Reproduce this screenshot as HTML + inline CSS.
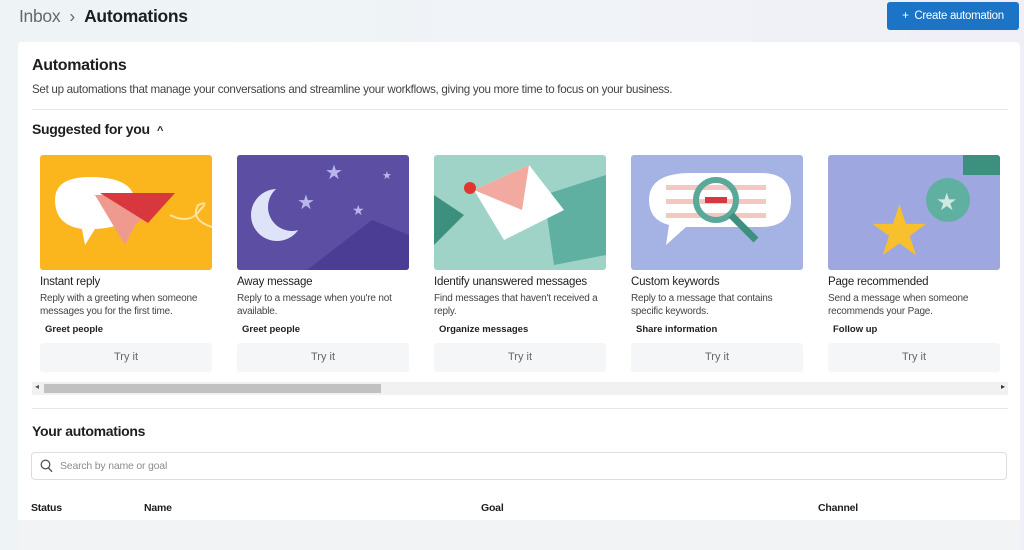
<!DOCTYPE html>
<html><head><meta charset="utf-8"><style>
*{box-sizing:border-box;margin:0;padding:0}
body{width:1024px;height:528px;overflow:hidden;font-family:"Liberation Sans",sans-serif;background:linear-gradient(90deg,#eef4f6,#f0f3f7 60%,#f0eef7);position:relative;color:#1c1e21}
.bc{position:absolute;left:19px;top:6px;font-size:17.5px;letter-spacing:-0.3px}
.bc .g{color:#65676b}
.bc b{font-weight:bold}
.btn{position:absolute;left:887px;top:2px;width:132px;height:28px;background:#1b74c5;border-radius:3px;color:#fff;font-size:11.5px;line-height:28px;text-align:center;letter-spacing:-0.3px}
.card{position:absolute;left:18px;top:42px;width:1002px;height:500px;background:#fff;border-radius:4px}
.h1{position:absolute;left:14px;top:15px;font-size:16px;font-weight:bold;letter-spacing:-0.3px}
.sub{position:absolute;left:14px;top:41px;font-size:11.6px;color:#444;letter-spacing:-0.3px}
.hr{position:absolute;left:14px;width:976px;height:1px;background:#e4e6ea}
.h2{position:absolute;left:14px;font-size:14px;font-weight:bold;letter-spacing:-0.3px}
.item{position:absolute;top:113px;width:172px}
.item svg{display:block;width:172px;height:115px;border-radius:3px}
.t{font-size:11.5px;margin-top:6px;letter-spacing:-0.2px}
.d{font-size:10px;color:#444;line-height:12.5px;margin-top:5px;height:25px;letter-spacing:-0.2px}
.tag{font-size:9.5px;font-weight:bold;margin:6px 0 0 5px}
.try{margin-top:8px;height:29px;background:#f5f6f7;border-radius:3px;text-align:center;line-height:29px;font-size:11px;color:#666}
.sb{position:absolute;left:14px;top:340px;width:976px;height:13px;background:#f1f1f1}
.sb .th{position:absolute;left:12px;top:2px;width:337px;height:9px;background:#c1c1c1}
.search{position:absolute;left:13px;top:410px;width:976px;height:28px;border:1px solid #dadde1;border-radius:4px;font-size:10.5px;color:#8a8d91;line-height:26px;padding-left:28px;letter-spacing:-0.2px}
.th2{position:absolute;top:460px;font-size:10.5px;font-weight:bold;letter-spacing:-0.2px}
</style></head><body>
<div class="bc"><span class="g">Inbox</span> <span class="g">&nbsp;›&nbsp;</span> <b>Automations</b></div>
<div class="btn">+&nbsp; Create automation</div>
<div class="card">
<div class="h1">Automations</div>
<div class="sub">Set up automations that manage your conversations and streamline your workflows, giving you more time to focus on your business.</div>
<div class="hr" style="top:67px"></div>
<div class="h2" style="top:79px">Suggested for you &nbsp;<span style="font-size:11px">^</span></div>

<div class="item" style="left:22px">
<svg viewBox="0 0 172 115"><rect width="172" height="115" fill="#fcb61d"/><path d="M15 45 Q15 22 50 22 Q95 22 95 48 Q95 72 55 74 L45 90 L42 74 Q15 70 15 45Z" fill="#fff"/><path d="M55 40 L135 38 L95 70 L85 90Z" fill="#ef9a8e"/><path d="M60 38 L135 38 L108 68Z" fill="#d9373e"/><path d="M130 60 Q150 70 160 55 Q170 45 158 50 Q150 65 172 72" stroke="#fde2a0" stroke-width="2" fill="none"/></svg>
<div class="t">Instant reply</div><div class="d">Reply with a greeting when someone messages you for the first time.</div><div class="tag">Greet people</div><div class="try">Try it</div></div>

<div class="item" style="left:219px">
<svg viewBox="0 0 172 115"><rect width="172" height="115" fill="#5c4ea3"/><path d="M70 115 L135 65 L172 80 L172 115Z" fill="#4b3d94"/><circle cx="40" cy="60" r="26" fill="#dfe3f7"/><circle cx="55" cy="52" r="24" fill="#5c4ea3"/><text x="88" y="24" fill="#b8b6ec" font-size="20">★</text><text x="60" y="54" fill="#b8b6ec" font-size="20">★</text><text x="115" y="60" fill="#b8b6ec" font-size="14">★</text><text x="145" y="24" fill="#b8b6ec" font-size="11">★</text></svg>
<div class="t">Away message</div><div class="d">Reply to a message when you're not available.</div><div class="tag">Greet people</div><div class="try">Try it</div></div>

<div class="item" style="left:416px">
<svg viewBox="0 0 172 115"><rect width="172" height="115" fill="#9fd3c7"/><path d="M0 40 L30 60 L0 90Z" fill="#3d8f7e"/><path d="M110 40 L172 20 L172 100 L120 110Z" fill="#5fb0a0"/><path d="M40 35 L95 10 L130 55 L70 85Z" fill="#fff"/><path d="M40 35 L95 10 L88 55Z" fill="#f2aaa0"/><circle cx="36" cy="33" r="6" fill="#e1352f"/></svg>
<div class="t">Identify unanswered messages</div><div class="d">Find messages that haven't received a reply.</div><div class="tag">Organize messages</div><div class="try">Try it</div></div>

<div class="item" style="left:613px">
<svg viewBox="0 0 172 115"><rect width="172" height="115" fill="#a4b3e3"/><path d="M18 45 Q18 18 60 18 L130 18 Q160 18 160 45 Q160 72 130 72 L55 72 L35 90 L38 70 Q18 65 18 45Z" fill="#fff"/><rect x="35" y="30" width="100" height="5" fill="#f4c7c0"/><rect x="35" y="44" width="100" height="5" fill="#f4c7c0"/><rect x="35" y="58" width="100" height="5" fill="#f4c7c0"/><circle cx="85" cy="45" r="20" fill="none" stroke="#5ba89b" stroke-width="6"/><rect x="74" y="42" width="22" height="6" fill="#d9373e"/><path d="M100 60 L125 85" stroke="#3d8f7e" stroke-width="7"/></svg>
<div class="t">Custom keywords</div><div class="d">Reply to a message that contains specific keywords.</div><div class="tag">Share information</div><div class="try">Try it</div></div>

<div class="item" style="left:810px">
<svg viewBox="0 0 172 115"><rect width="172" height="115" fill="#9fa7e0"/><circle cx="120" cy="45" r="22" fill="#5fb0a0"/><rect x="135" y="0" width="37" height="20" fill="#3d8f7e"/><text x="40" y="100" fill="#f9c02e" font-size="70">★</text><text x="108" y="55" fill="#cfe8e2" font-size="24">★</text></svg>
<div class="t">Page recommended</div><div class="d">Send a message when someone recommends your Page.</div><div class="tag">Follow up</div><div class="try">Try it</div></div>

<div class="sb"><span style="position:absolute;left:3px;top:0;font-size:8px;color:#555">◂</span><div class="th"></div><span style="position:absolute;right:3px;top:0;font-size:8px;color:#333">▸</span></div>
<div class="hr" style="top:366px"></div>
<div class="h2" style="top:381px">Your automations</div>
<div class="search"><svg style="position:absolute;left:8px;top:6px" width="13" height="14" viewBox="0 0 13 14"><circle cx="5.5" cy="5.5" r="4.3" fill="none" stroke="#555" stroke-width="1.3"/><path d="M8.6 9 L12 12.8" stroke="#555" stroke-width="1.4"/></svg>Search by name or goal</div>
<div class="th2" style="left:13px">Status</div><div class="th2" style="left:126px">Name</div><div class="th2" style="left:463px">Goal</div><div class="th2" style="left:800px">Channel</div>
<div style="position:absolute;left:0;top:478px;width:1002px;height:30px;background:#f2f3f5"></div>
</div>
</body></html>
